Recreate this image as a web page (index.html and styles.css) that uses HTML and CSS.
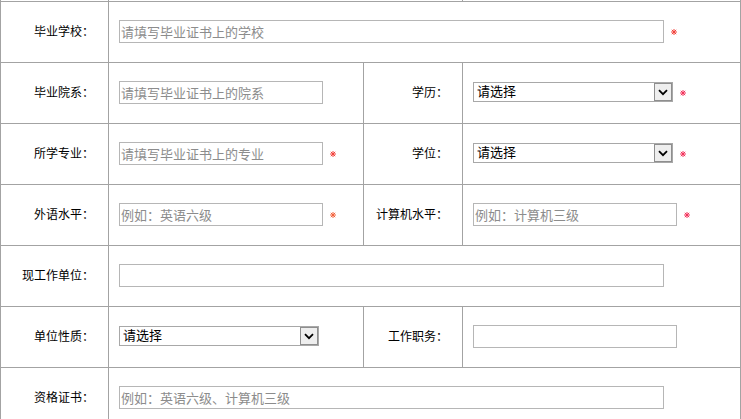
FILE: index.html
```html
<!DOCTYPE html>
<html lang="zh-CN">
<head>
<meta charset="utf-8">
<title>教育信息</title>
<link rel="stylesheet" href="styles.css">
</head>
<body>
<div class="form">
  <div class="lab"></div><div class="val span2"></div><div class="val"></div>

  <div class="lab">毕业学校：</div>
  <div class="val span3"><input class="txt wide" placeholder="请填写毕业证书上的学校"><svg class="req" viewBox="0 0 6 6" width="6" height="6"><path d="M3 0V6M0 3H6M0.8 0.8L5.2 5.2M5.2 0.8L0.8 5.2" stroke="#f2403a" stroke-width="1"/></svg></div>

  <div class="lab">毕业院系：</div>
  <div class="val"><input class="txt" placeholder="请填写毕业证书上的院系"></div>
  <div class="lab">学历：</div>
  <div class="val"><span class="sel"><select><option>请选择</option></select><span class="btn"><svg viewBox="0 0 18 18" width="18" height="18"><path d="M4.5 7L9 11.5L13.5 7" fill="none" stroke="#000" stroke-width="2"/></svg></span></span><svg class="req" viewBox="0 0 6 6" width="6" height="6"><path d="M3 0V6M0 3H6M0.8 0.8L5.2 5.2M5.2 0.8L0.8 5.2" stroke="#f2305a" stroke-width="1"/></svg></div>

  <div class="lab">所学专业：</div>
  <div class="val"><input class="txt" placeholder="请填写毕业证书上的专业"><svg class="req" viewBox="0 0 6 6" width="6" height="6"><path d="M3 0V6M0 3H6M0.8 0.8L5.2 5.2M5.2 0.8L0.8 5.2" stroke="#f2403a" stroke-width="1"/></svg></div>
  <div class="lab">学位：</div>
  <div class="val"><span class="sel"><select><option>请选择</option></select><span class="btn"><svg viewBox="0 0 18 18" width="18" height="18"><path d="M4.5 7L9 11.5L13.5 7" fill="none" stroke="#000" stroke-width="2"/></svg></span></span><svg class="req" viewBox="0 0 6 6" width="6" height="6"><path d="M3 0V6M0 3H6M0.8 0.8L5.2 5.2M5.2 0.8L0.8 5.2" stroke="#f2305a" stroke-width="1"/></svg></div>

  <div class="lab">外语水平：</div>
  <div class="val"><input class="txt" placeholder="例如：英语六级"><svg class="req" viewBox="0 0 6 6" width="6" height="6"><path d="M3 0V6M0 3H6M0.8 0.8L5.2 5.2M5.2 0.8L0.8 5.2" stroke="#f2603a" stroke-width="1"/></svg></div>
  <div class="lab">计算机水平：</div>
  <div class="val"><input class="txt" placeholder="例如：计算机三级"><svg class="req" viewBox="0 0 6 6" width="6" height="6"><path d="M3 0V6M0 3H6M0.8 0.8L5.2 5.2M5.2 0.8L0.8 5.2" stroke="#f2305a" stroke-width="1"/></svg></div>

  <div class="lab">现工作单位：</div>
  <div class="val span3"><input class="txt wide"></div>

  <div class="lab">单位性质：</div>
  <div class="val"><span class="sel"><select><option>请选择</option></select><span class="btn"><svg viewBox="0 0 18 18" width="18" height="18"><path d="M4.5 7L9 11.5L13.5 7" fill="none" stroke="#000" stroke-width="2"/></svg></span></span></div>
  <div class="lab">工作职务：</div>
  <div class="val"><input class="txt"></div>

  <div class="lab">资格证书：</div>
  <div class="val span3"><input class="txt wide" placeholder="例如：英语六级、计算机三级"></div>
</div>
</body>
</html>
```
FILE: styles.css
```css
html, body {
  margin: 0;
  padding: 0;
  background: #fff;
}
body {
  font-family: "Noto Sans CJK SC", "Liberation Sans", sans-serif;
  overflow: hidden;
}
.form {
  display: grid;
  grid-template-columns: 107px 254px 98px 277px;
  grid-auto-rows: 60px;
  gap: 1px;
  padding: 1px;
  width: 741px;
  box-sizing: border-box;
  margin-top: -60px;
  background: #a3a3a3;
}
.lab, .val {
  background: #fff;
  display: flex;
  align-items: center;
}
.lab {
  justify-content: flex-end;
  padding-right: 14px;
  padding-bottom: 3px;
  font-size: 12px;
  color: #000;
}
.val {
  padding-left: 10px;
  padding-bottom: 1px;
  gap: 7px;
}
.span2 {
  grid-column: span 2;
}
.span3 {
  grid-column: span 3;
}
.txt {
  box-sizing: border-box;
  width: 204px;
  height: 23px;
  margin: 0;
  padding: 0 1px;
  border: 1px solid #b6b6b6;
  font-family: "Noto Sans CJK SC", sans-serif;
  font-size: 13px;
  color: #333;
  background: #fff;
  outline: none;
}
.txt.wide {
  width: 545px;
}
.txt::placeholder {
  color: #8c8c8c;
}
.sel {
  position: relative;
  display: block;
  width: 200px;
  height: 20px;
  margin-top: -2px;
}
.sel select {
  appearance: none;
  -webkit-appearance: none;
  display: block;
  box-sizing: border-box;
  width: 200px;
  height: 20px;
  margin: 0;
  padding: 0 0 3px 3px;
  border: 1px solid #a8a8a8;
  border-radius: 0;
  background: #fff;
  font-family: "Noto Sans CJK SC", sans-serif;
  font-size: 13px;
  line-height: 15px;
  color: #000;
}
.btn {
  position: absolute;
  top: 1px;
  right: 1px;
  width: 18px;
  height: 18px;
  box-sizing: border-box;
  border: 1px solid #8e8e8e;
  background: #eeeeee;
  display: flex;
  align-items: center;
  justify-content: center;
  pointer-events: none;
}
.btn svg {
  width: 16px;
  height: 16px;
}
.req {
  flex: none;
}
```
